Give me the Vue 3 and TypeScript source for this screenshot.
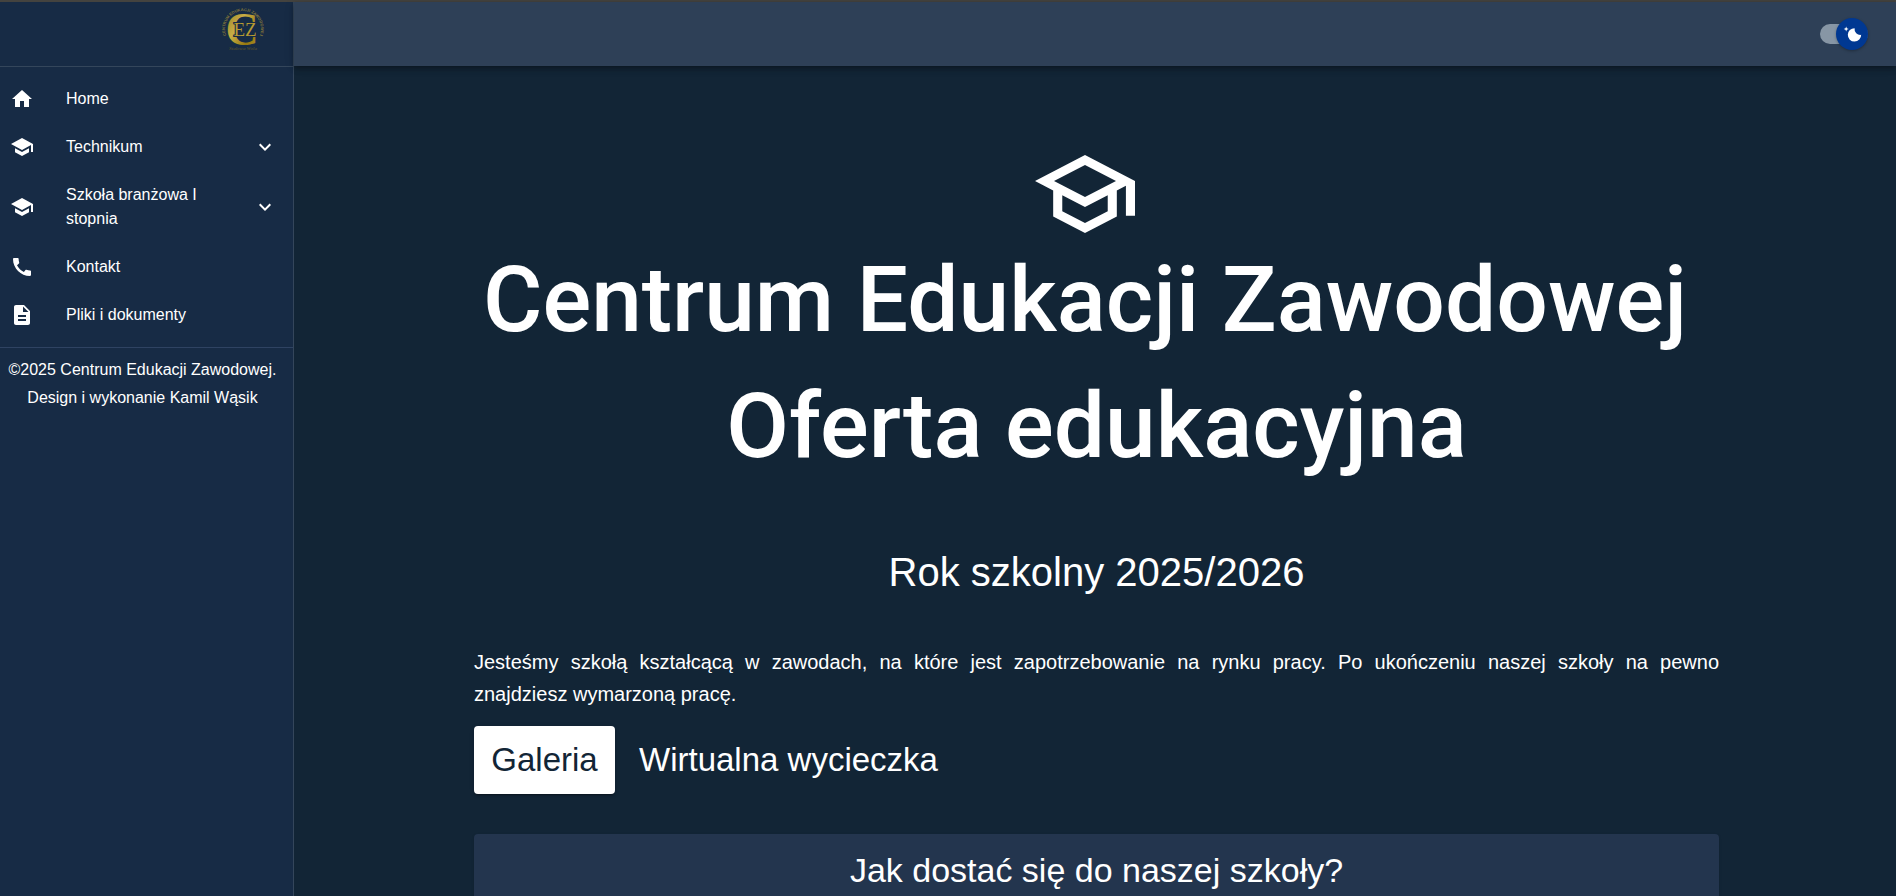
<script setup lang="ts">
import { ref } from 'vue'

interface NavItem {
  label: string
  icon: string
  expandable?: boolean
}

const school = 'M5 13.18v4L12 21l7-3.82v-4L12 17l-7-3.82zM12 3 1 9l11 6 9-4.91V17h2V9L12 3z'

const items: NavItem[] = [
  { label: 'Home', icon: 'M10 20v-6h4v6h5v-8h3L12 3 2 12h3v8z' },
  { label: 'Technikum', icon: school, expandable: true },
  { label: 'Szkoła branżowa I stopnia', icon: school, expandable: true },
  {
    label: 'Kontakt',
    icon: 'M20.01 15.38c-1.23 0-2.42-.2-3.53-.56-.35-.12-.74-.03-1.01.24l-1.57 1.97c-2.83-1.35-5.48-3.9-6.89-6.83l1.95-1.66c.27-.28.35-.67.24-1.02-.37-1.11-.56-2.3-.56-3.53 0-.54-.45-.99-.99-.99H4.19C3.65 3 3 3.24 3 3.99 3 13.28 10.73 21 20.01 21c.71 0 .99-.63.99-1.18v-3.45c0-.54-.45-.99-.99-.99z',
  },
  {
    label: 'Pliki i dokumenty',
    icon: 'M14 2H6c-1.1 0-1.99.9-1.99 2L4 20c0 1.1.89 2 1.99 2H18c1.1 0 2-.9 2-2V8l-6-6zm2 16H8v-2h8v2zm0-4H8v-2h8v2zm-3-5V3.5L18.5 9H13z',
  },
]

const dark = ref(true)
</script>

<template>
  <div class="layout">
    <aside class="sidebar">
      <div class="brand">
        <svg class="logo" viewBox="0 0 46 46" role="img" aria-label="Centrum Edukacji Zawodowej">
          <defs>
            <linearGradient id="gold" x1="0" y1="0" x2="1" y2="1">
              <stop offset="0" stop-color="#8c7420" />
              <stop offset="0.4" stop-color="#c9ae45" />
              <stop offset="0.7" stop-color="#96780f" />
              <stop offset="1" stop-color="#b79b32" />
            </linearGradient>
            <path id="ring" d="M10.3 35.7A18 18 0 1 1 35.7 35.7" />
          </defs>
          <text class="ring-text" text-anchor="middle">
            <textPath href="#ring" startOffset="50%">CENTRUM EDUKACJI ZAWODOWEJ</textPath>
          </text>
          <text class="logo-c" x="22" y="39" text-anchor="middle">C</text>
          <text class="logo-ez" x="25" y="30" text-anchor="middle">EZ</text>
          <text class="logo-city" x="23" y="44" text-anchor="middle">Stalowa Wola</text>
        </svg>
      </div>

      <nav class="menu">
        <template v-for="item in items" :key="item.label">
          <button v-if="item.expandable" type="button" class="row" aria-expanded="false">
            <svg class="icon" viewBox="0 0 24 24" aria-hidden="true"><path :d="item.icon" /></svg>
            <span class="label">{{ item.label }}</span>
            <svg class="chevron" viewBox="0 0 24 24" aria-hidden="true">
              <path d="M16.59 8.59 12 13.17 7.41 8.59 6 10l6 6 6-6z" />
            </svg>
          </button>
          <a v-else href="#" class="row">
            <svg class="icon" viewBox="0 0 24 24" aria-hidden="true"><path :d="item.icon" /></svg>
            <span class="label">{{ item.label }}</span>
          </a>
        </template>
      </nav>

      <p class="credits">©2025 Centrum Edukacji Zawodowej.<br />Design i wykonanie Kamil Wąsik</p>
    </aside>

    <div class="page">
      <header class="appbar">
        <label class="switch">
          <input v-model="dark" type="checkbox" aria-label="Tryb ciemny" />
          <span class="thumb">
            <svg viewBox="0 0 20 20" aria-hidden="true">
              <path d="M4.2 2.5l-.7 1.8-1.8.7 1.8.7.7 1.8.6-1.8L6.7 5l-1.9-.7-.6-1.8zm15 8.3a6.7 6.7 0 1 1-6.6-6.6 5.8 5.8 0 0 0 6.6 6.6z" />
            </svg>
          </span>
        </label>
      </header>

      <main class="content">
        <div class="container">
          <svg class="cap" viewBox="1 3 22 18" preserveAspectRatio="none" aria-hidden="true">
            <path d="M12 3 1 9l4 2.18v6L12 21l7-3.82v-6l2-1.09V17h2V9L12 3zm6.82 6L12 12.72 5.18 9 12 5.28 18.82 9zM17 15.99l-5 2.73-5-2.73v-3.72L12 15l5-2.73v3.72z" />
          </svg>
          <h1><span class="school-name">Centrum Edukacji Zawodowej</span> Oferta edukacyjna</h1>
          <h2>Rok szkolny 2025/2026</h2>
          <p class="intro">
            Jesteśmy szkołą kształcącą w zawodach, na które jest zapotrzebowanie na rynku pracy. Po ukończeniu naszej
            szkoły na pewno znajdziesz&nbsp;wymarzoną pracę.
          </p>
          <div class="actions">
            <button type="button" class="btn primary">Galeria</button>
            <button type="button" class="btn">Wirtualna wycieczka</button>
          </div>
          <section class="card">
            <h3>Jak dostać się do naszej szkoły?</h3>
          </section>
        </div>
      </main>
    </div>
  </div>
</template>

<style>
body {
  margin: 0;
  background: #122536;
}
</style>

<style scoped>
* {
  box-sizing: border-box;
}
.layout {
  display: flex;
  min-height: 100vh;
  border-top: 2px solid #44433f;
  background: #122536;
  color: #fff;
  font-family: 'Liberation Sans', Arial, sans-serif;
  font-size: 16px;
}
.sidebar {
  flex: none;
  width: 294px;
  border-right: 1px solid #34465b;
  background: #172b45;
}
.brand {
  display: flex;
  justify-content: flex-end;
  height: 65px;
  padding: 4px 27px 0 0;
  border-bottom: 1px solid #34465b;
}
.logo {
  width: 46px;
  height: 46px;
}
.ring-text {
  fill: #85783a;
  font-size: 4px;
  font-weight: 700;
}
.logo-c {
  fill: url(#gold);
  font-family: 'Liberation Serif', serif;
  font-size: 46px;
  font-weight: 700;
}
.logo-ez {
  fill: #b79b32;
  stroke: #172b45;
  stroke-width: 2px;
  paint-order: stroke;
  font-family: 'Liberation Serif', serif;
  font-size: 19px;
}
.logo-city {
  fill: #4d4a33;
  font-family: 'Liberation Serif', serif;
  font-size: 5px;
  font-style: italic;
  font-weight: 700;
}
.menu {
  display: flex;
  flex-direction: column;
  padding: 8px 0;
  border-bottom: 1px solid #2f4362;
}
.row {
  display: flex;
  align-items: center;
  min-height: 48px;
  padding: 12px 16px 12px 10px;
  border: 0;
  background: none;
  color: inherit;
  font: inherit;
  line-height: 24px;
  text-align: left;
  text-decoration: none;
  cursor: pointer;
}
.icon,
.chevron {
  flex: none;
  width: 24px;
  height: 24px;
  fill: currentColor;
}
.label {
  flex: 1;
  padding: 0 32px;
}
.credits {
  margin: 0;
  padding: 8px 12px 8px 4px;
  line-height: 28px;
  text-align: center;
}
.page {
  display: flex;
  flex: 1;
  flex-direction: column;
  min-width: 0;
}
.appbar {
  display: flex;
  align-items: center;
  justify-content: flex-end;
  height: 64px;
  padding: 0 28px;
  background: #2e4057;
  box-shadow: 0 2px 4px -1px rgba(0, 0, 0, 0.2), 0 4px 5px rgba(0, 0, 0, 0.14), 0 1px 10px rgba(0, 0, 0, 0.12);
}
.switch {
  display: flex;
  align-items: center;
  width: 48px;
  height: 20px;
  border-radius: 10px;
  background: #8796a5;
  cursor: pointer;
}
.switch input {
  width: 16px;
  height: 20px;
  margin: 0;
  opacity: 0;
}
.thumb {
  display: flex;
  flex: none;
  align-items: center;
  justify-content: center;
  width: 32px;
  height: 32px;
  border-radius: 50%;
  background: #003892;
  box-shadow: 0 1px 3px rgba(0, 0, 0, 0.3);
}
.thumb svg {
  width: 20px;
  height: 20px;
  fill: #fff;
}
.content {
  display: flex;
  flex: 1;
  justify-content: center;
  padding: 89px 16px 0 19px;
}
.container {
  display: flex;
  flex-direction: column;
  width: 100%;
  max-width: 1245px;
}
.cap {
  align-self: center;
  width: 123px;
  height: 78px;
  padding-right: 23px;
  fill: #fff;
}
h1,
h2,
h3 {
  margin: 0;
  text-align: center;
}
h1 {
  margin-top: 4px;
  font: 500 91px/126px Roboto, sans-serif;
}
.school-name {
  display: block;
  padding-right: 23px;
}
h2 {
  margin-top: 53px;
  font-size: 40px;
  font-weight: 400;
  line-height: 60px;
}
.intro {
  margin: 44px 0 16px;
  font-size: 20px;
  line-height: 32px;
  text-align: justify;
}
.actions {
  display: flex;
  gap: 8px;
}
.btn {
  min-width: 141px;
  height: 68px;
  padding: 0 16px;
  border: 0;
  border-radius: 4px;
  background: none;
  color: #fff;
  font: 400 33px/56px 'Liberation Sans', Arial, sans-serif;
  cursor: pointer;
}
.primary {
  background: #fff;
  color: #122536;
  box-shadow: 0 3px 1px -2px rgba(0, 0, 0, 0.2), 0 2px 2px rgba(0, 0, 0, 0.14), 0 1px 5px rgba(0, 0, 0, 0.12);
}
.card {
  flex: 1;
  margin-top: 40px;
  padding: 16px;
  border-radius: 4px 4px 0 0;
  background: #23354e;
  box-shadow: 0 2px 1px -1px rgba(0, 0, 0, 0.2), 0 1px 3px rgba(0, 0, 0, 0.12);
}
h3 {
  font-size: 34px;
  font-weight: 400;
  line-height: 40px;
}
</style>
